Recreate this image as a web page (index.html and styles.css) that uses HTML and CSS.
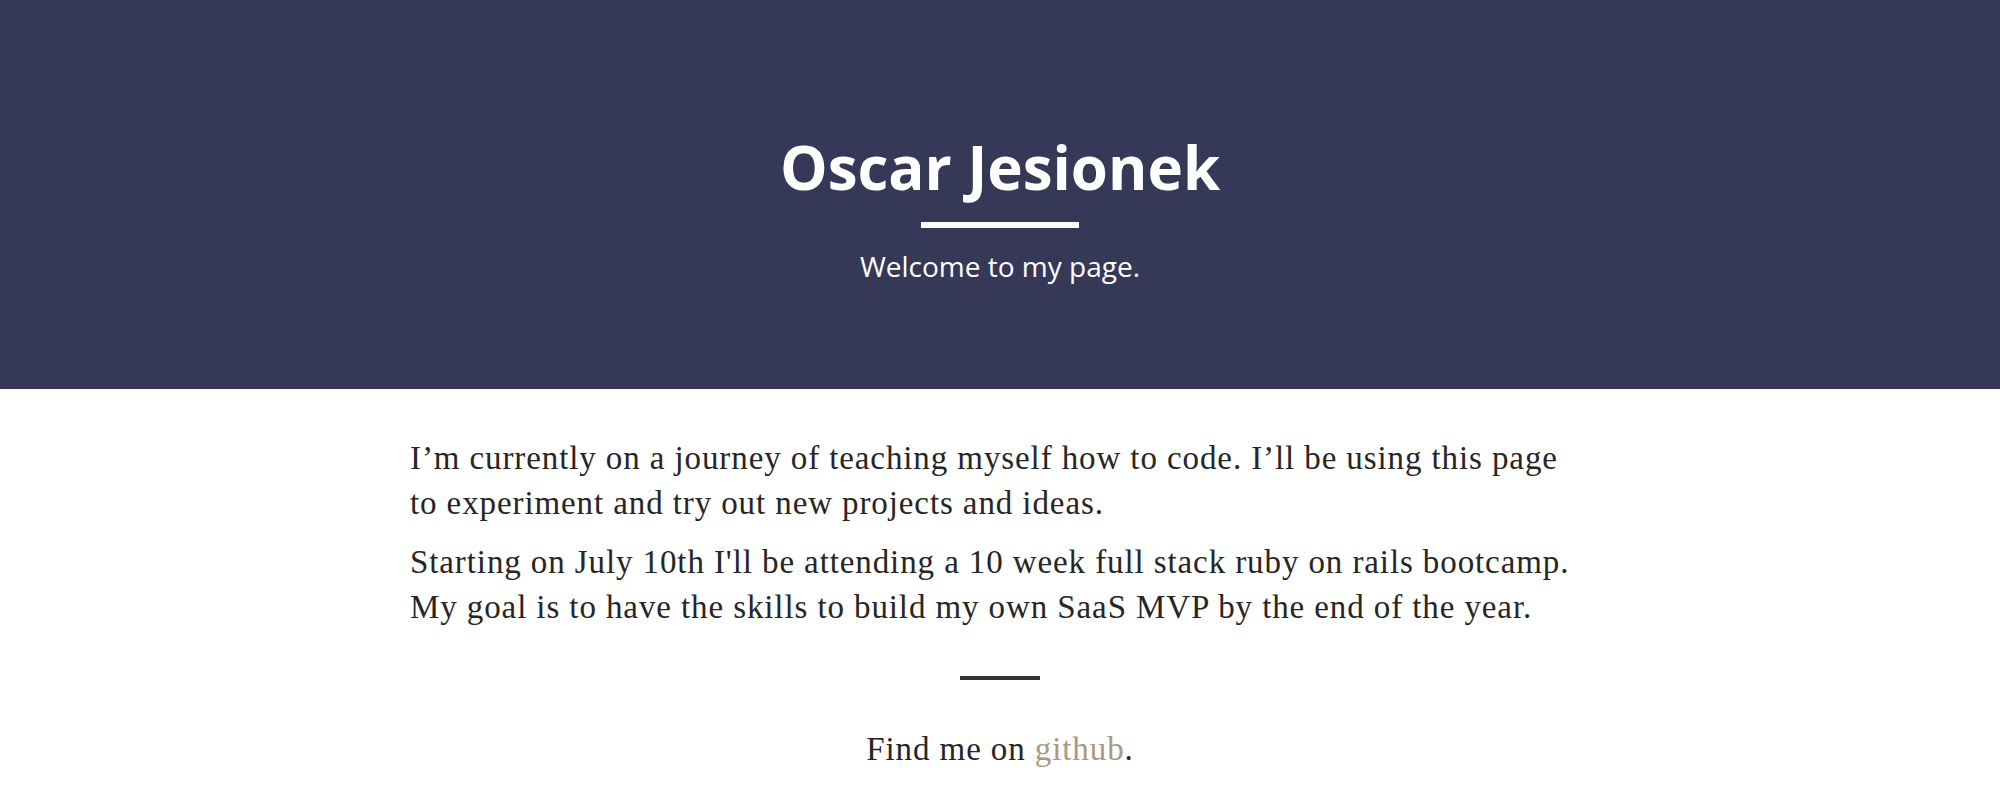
FILE: index.html
```html
<!DOCTYPE html>
<html lang="en">
<head>
<meta charset="utf-8">
<title>Oscar Jesionek</title>
<link rel="stylesheet" href="styles.css">
</head>
<body>
<header class="hero">
  <h1 class="hero-title">Oscar Jesionek</h1>
  <div class="hero-rule"></div>
  <p class="hero-sub">Welcome to my page.</p>
</header>
<main class="content">
  <p class="para">I’m currently on a journey of teaching myself how to code. I’ll be using this page to experiment and try out new projects and ideas.</p>
  <p class="para">Starting on July 10th I'll be attending a 10 week full stack ruby on rails bootcamp. My goal is to have the skills to build my own SaaS MVP by the end of the year.</p>
  <div class="divider"></div>
  <p class="find">Find me on <a class="link" href="#">github</a>.</p>
</main>
</body>
</html>
```
FILE: styles.css
```css
html, body {
  margin: 0;
  padding: 0;
  background: #ffffff;
}

.hero {
  box-sizing: border-box;
  height: 389px;
  padding-top: 131px;
  background: #353857;
  display: flex;
  flex-direction: column;
  align-items: center;
  font-family: "Open Sans", "Noto Sans", sans-serif;
  color: #ffffff;
}

.hero-title {
  margin: 0;
  font-size: 60px;
  line-height: 72px;
  font-weight: 700;
}

.hero-rule {
  width: 158px;
  height: 6px;
  margin-top: 19px;
  background: #ffffff;
}

.hero-sub {
  margin: 18px 0 0;
  font-size: 28px;
  line-height: 40px;
  font-weight: 400;
}

.content {
  width: 1180px;
  margin: 0 auto;
  padding-top: 47px;
  font-family: "Liberation Serif", "Times New Roman", serif;
  font-size: 33px;
  line-height: 45px;
  letter-spacing: 0.9px;
  color: #262626;
}

.para {
  margin: 0 0 14px;
}

.divider {
  width: 80px;
  height: 4px;
  margin: 46px auto 0;
  background: #333333;
}

.find {
  margin: 47px 0 0;
  text-align: center;
}

.link {
  color: #a89a7f;
  text-decoration: none;
}
```
